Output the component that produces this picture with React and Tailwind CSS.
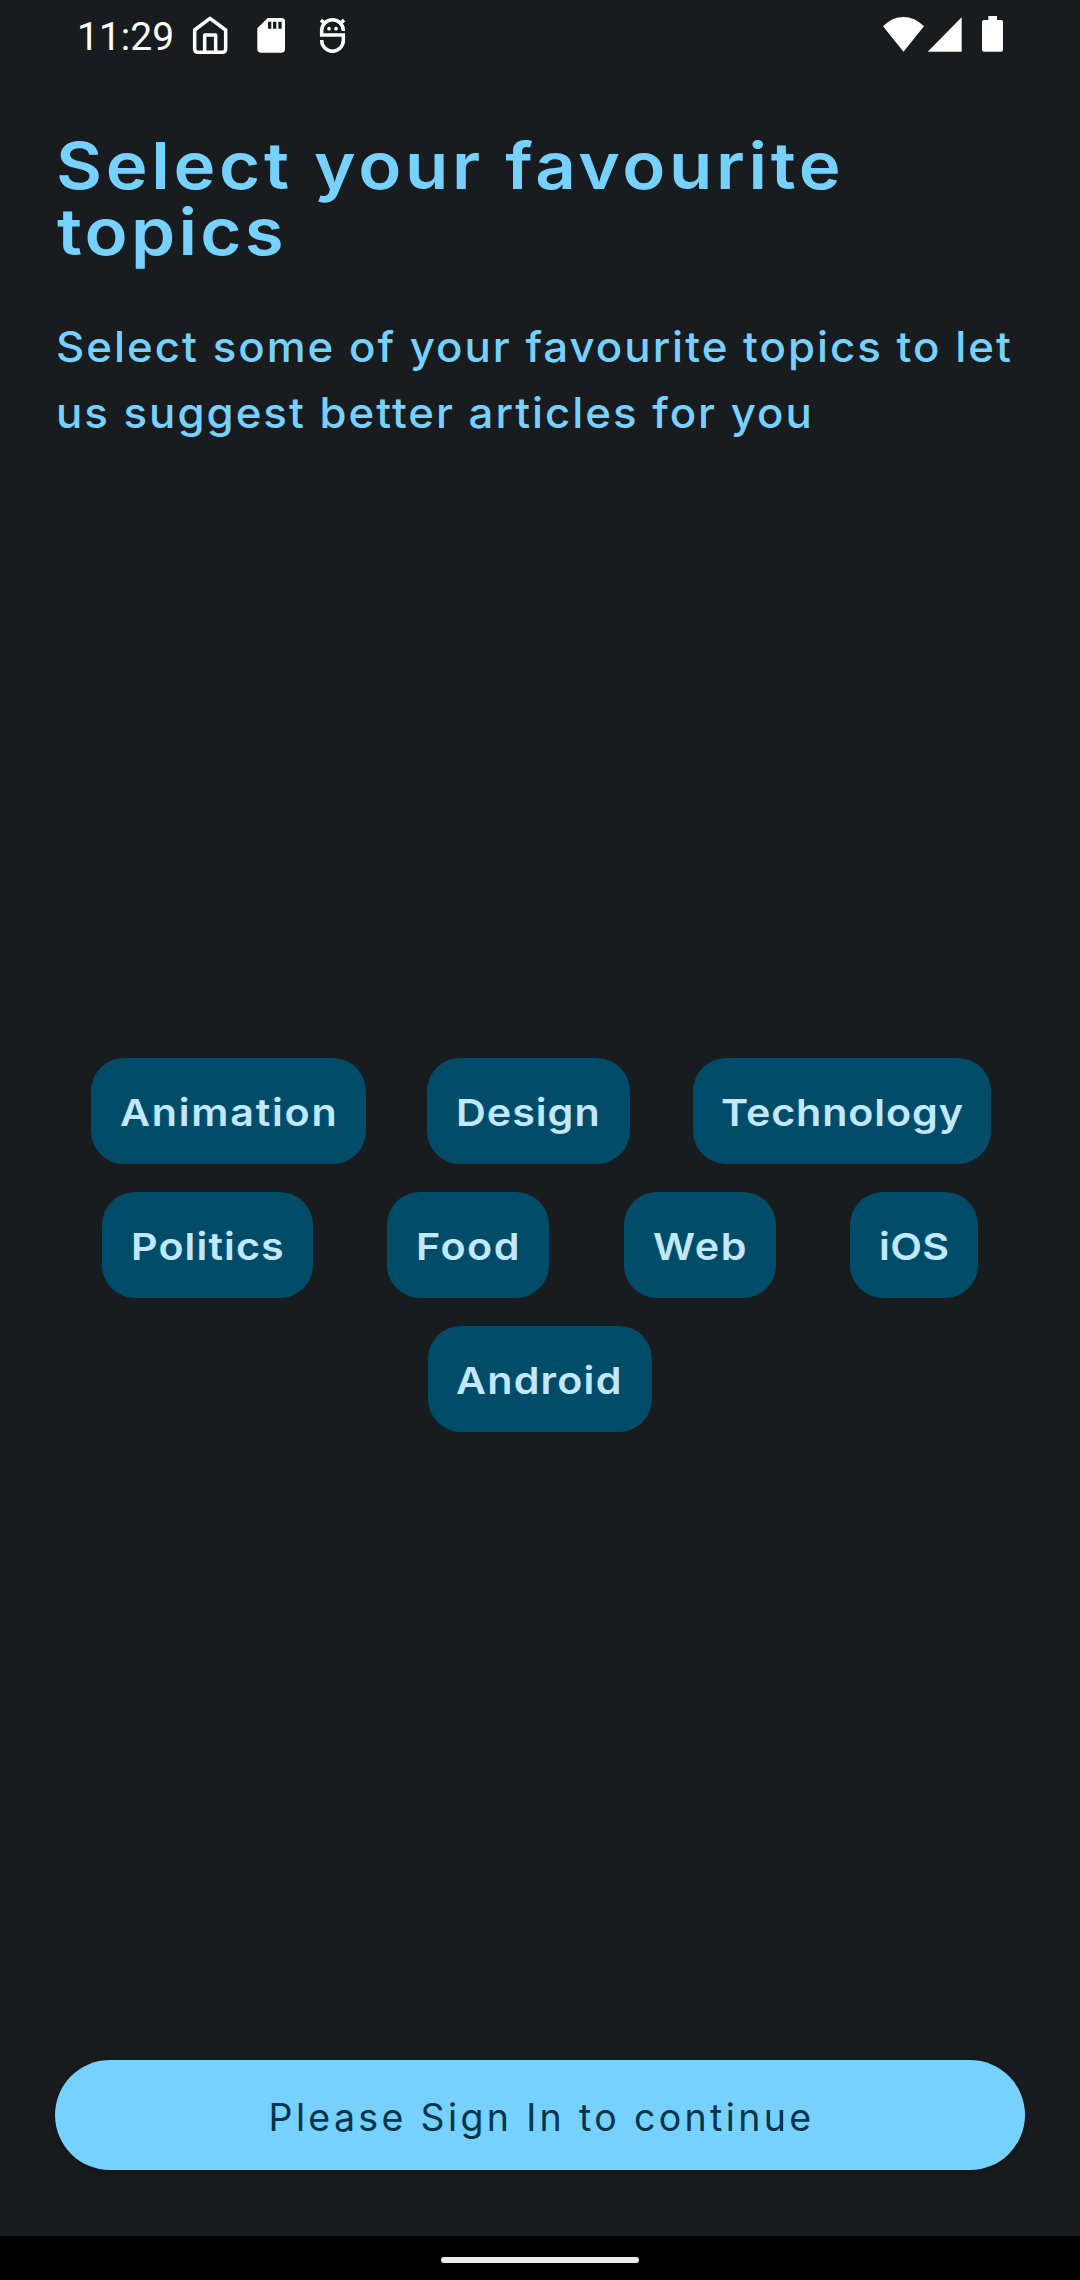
import React from "react";

const topicRows = [
  [
    { name: "Animation", box: "w-[275px]", text: "tracking-[1.6px] ml-[29px]" },
    { name: "Design", box: "w-[203px] -ml-px", text: "tracking-[0.9px] ml-[29px]" },
    { name: "Technology", box: "w-[298px] -mr-px", text: "tracking-[0.8px] ml-[28px]" },
  ],
  [
    { name: "Politics", box: "w-[211px]", text: "tracking-[1px] ml-[29px]" },
    { name: "Food", box: "w-[162px]", text: "tracking-[1.4px] ml-[29px]" },
    { name: "Web", box: "w-[152px]", text: "tracking-[1.5px] ml-[29px]" },
    { name: "iOS", box: "w-[128px]", text: "tracking-[0.3px] ml-[29px]" },
  ],
  [{ name: "Android", box: "w-[224px]", text: "tracking-[1.1px] ml-[28px]" }],
];

function StatusBar() {
  return (
    <header className="flex h-[70px] items-start text-white">
      <span className="ml-[77px] mt-[14px] w-[96px] whitespace-nowrap font-['Roboto',sans-serif] text-[39px] leading-[46px]">11:29</span>
      <svg className="ml-[15px] mt-[12px] h-[46px] w-[44px]" viewBox="0 0 132 138" fill="none" stroke="currentColor" strokeWidth="10.500" strokeLinejoin="round">
        <path d="M66 19L113 54V111Q113 121 103 121H30Q20 121 20 111V54ZM50 121V69H83V121" />
      </svg>
      <svg className="ml-[18px] mt-[12px] h-[46px] w-[44px]" viewBox="0 0 132 138" fill="currentColor">
        <path fillRule="evenodd" d="M53 18H95Q105 18 105 28V112Q105 122 95 122H32Q22 122 22 112V49ZM54 29V50H64V29ZM69 29V50H79V29ZM85 29V50H95V29Z" />
      </svg>
      <svg className="ml-[16px] mt-[12px] h-[46px] w-[44px]" viewBox="0 0 132 138" fill="none" stroke="currentColor" strokeWidth="10.500">
        <path d="M100 57V56A32.500 32.500 0 0 0 35 56V69H100V85A32.500 32.500 0 0 1 35 85V84M33 24L46 37M102 24L89 37" />
        <circle cx="57" cy="50" r="5.500" fill="currentColor" stroke="none" />
        <circle cx="78" cy="50" r="5.500" fill="currentColor" stroke="none" />
      </svg>
      <svg className="ml-[506px] h-[70px] w-[180px]" viewBox="0 0 540 210" fill="currentColor">
        <path d="M69 79Q96 51 130 51T192 79L130.500 155ZM203 155L305 52V155ZM385 48H411V60H423Q429 60 429 66V149Q429 155 423 155H372Q366 155 366 149V66Q366 60 372 60H385Z" />
      </svg>
    </header>
  );
}

export default function App() {
  return (
    <div className="flex h-[2280px] w-[1080px] flex-col bg-[#191c1e] font-['Inter',sans-serif]">
      <StatusBar />
      <main className="flex flex-1 flex-col">
        <h1 className="ml-[56px] mt-[63px] whitespace-nowrap text-[65px] font-[560] leading-[66px] text-[#76d1ff]">
          <span className="block w-fit origin-left scale-x-[1.09] tracking-[3.35px]">Select your favourite</span>
          <span className="block w-fit origin-left translate-x-px scale-x-[1.09] tracking-[3px]">topics</span>
        </h1>
        <p className="ml-[56px] mt-[49px] whitespace-nowrap text-[42.5px] font-medium leading-[66px] text-[#76d1ff]">
          <span className="block w-fit origin-left scale-x-[1.03] tracking-[1.95px]">Select some of your favourite topics to let</span>
          <span className="block w-fit origin-left scale-x-[1.03] tracking-[1.93px]">us suggest better articles for you</span>
        </p>
        <section className="mt-auto flex flex-col gap-7 px-7">
          {topicRows.map((row) => (
            <div key={row[0].name} className="flex justify-evenly">
              {row.map((topic) => (
                <button key={topic.name} className={`flex h-[106px] shrink-0 items-center whitespace-nowrap rounded-[33px] bg-[#004c69] pt-[5px] text-[37.5px] font-[560] text-[#c2e8ff] ${topic.box}`}>
                  <span className={`origin-left scale-x-[1.1] ${topic.text}`}>{topic.name}</span>
                </button>
              ))}
            </div>
          ))}
        </section>
        <button className="mx-[55px] mb-[66px] mt-[628px] flex h-[110px] shrink-0 items-center justify-center whitespace-nowrap rounded-full bg-[#76d1ff] pl-[3px] pt-[7px] text-[37.5px] tracking-[3.35px] text-[#003549] shadow-[0_4px_8px_rgba(0,0,0,0.25)]">
          Please Sign In to continue
        </button>
      </main>
      <footer className="flex h-[44px] items-center justify-center bg-black pt-1">
        <div className="h-[6px] w-[198px] rounded-full bg-[#ececec]" />
      </footer>
    </div>
  );
}
